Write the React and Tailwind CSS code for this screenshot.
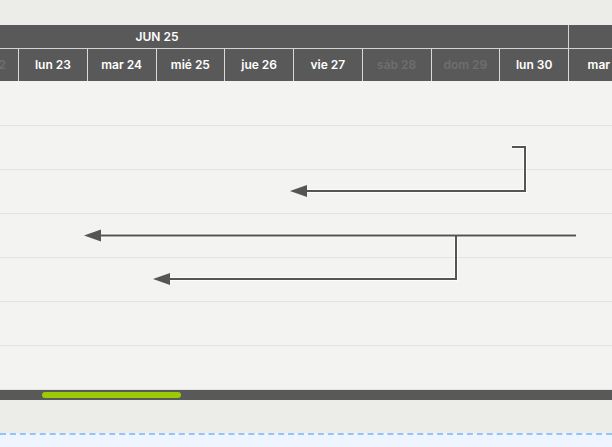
const DAYS = [
  { label: 'dom 22', off: true },
  { label: 'lun 23' },
  { label: 'mar 24' },
  { label: 'mié 25' },
  { label: 'jue 26' },
  { label: 'vie 27' },
  { label: 'sáb 28', off: true },
  { label: 'dom 29', off: true },
  { label: 'lun 30' },
  { label: 'mar 1' },
]

const ROWS = [0, 1, 2, 3, 4, 5, 6]

export default function App() {
  return (
    <div
      className="relative w-[612px] h-[447px] overflow-hidden flex flex-col bg-[#eeeeea]"
      style={{ fontFamily: 'Inter, "Noto Sans", sans-serif' }}
    >
      {/* Toolbar strip */}
      <div className="h-[25px] shrink-0 bg-[#ecece8]" />

      {/* Timeline header */}
      <div className="shrink-0 bg-[#595959] text-white text-[12px] font-semibold">
        <div className="flex h-[24px] ml-[-49.75px] border-b border-[#d4d4d4]">
          <div className="w-[618.75px] shrink-0 border-r border-[#d4d4d4] flex items-center">
            <div className="w-[413.5px] text-center">JUN 25</div>
          </div>
          <div className="w-[68.75px] shrink-0" />
        </div>
        <div className="flex h-[32px] ml-[-49.75px]">
          {DAYS.map((d) => (
            <div
              key={d.label}
              className={`w-[68.75px] shrink-0 border-r border-[#d9d9d9] flex items-center justify-center whitespace-nowrap ${
                d.off ? 'text-[#6f6f6f]' : 'text-white'
              }`}
            >
              {d.label}
            </div>
          ))}
        </div>
      </div>

      {/* Body rows */}
      <div className="shrink-0 bg-[#f3f3f1] pt-px">
        {ROWS.map((r) => (
          <div key={r} className="h-[44px] border-b border-[#e3e3e0]" />
        ))}
      </div>

      {/* Horizontal scrollbar */}
      <div className="h-[10px] shrink-0 bg-[#595959] pt-[2px]">
        <div className="ml-[42px] w-[139px] h-[6px] rounded-full bg-[#9acb05]" />
      </div>

      <div className="h-[33px] shrink-0 bg-[#ecece8]" />
      <div className="flex-1 border-t-2 border-dashed border-[#93c5fd] bg-[#eef5fe]" />

      {/* Dependency arrows */}
      <svg className="absolute top-0 left-0 pointer-events-none" width="612" height="447">
        <g fill="none" stroke="#ffffff" strokeOpacity="0.7" strokeWidth="4">
          <path d="M512 147 H525 V191 H306" />
          <path d="M576 235.5 H101" />
          <path d="M456 236 V279 H170" />
        </g>
        <g fill="none" stroke="#555555" strokeWidth="2">
          <path d="M512 147 H525 V191 H306" />
          <path d="M576 235.5 H101" />
          <path d="M456 236 V279 H170" />
        </g>
        <g fill="#555555">
          <polygon points="290,191 307,185 307,197" />
          <polygon points="84,235.5 101,229.5 101,241.5" />
          <polygon points="153,279 170,273 170,285" />
        </g>
      </svg>
    </div>
  )
}
